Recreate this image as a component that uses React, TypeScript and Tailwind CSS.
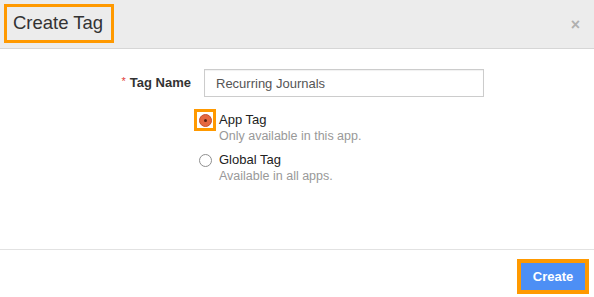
export default function App() {
  return (
    <div className="w-[594px] h-[297px] bg-white flex flex-col font-['Liberation_Sans',Arial,sans-serif] text-[#333]">
      {/* header */}
      <div className="h-[49px] bg-[#ececec] border-b border-[#d6d6d6] flex items-start justify-between shrink-0">
        <div className="ml-[4px] mt-[4px] w-[110px] h-[39px] pl-[6px] border-[3px] border-[#ff9900] flex items-center">
          <h1 className="text-[18.5px] leading-none text-[#333]">Create Tag</h1>
        </div>
        <button className="mt-[17px] mr-[14px] text-[16px] font-bold leading-none text-[#b0b0b0]">×</button>
      </div>

      {/* body */}
      <div className="flex-1 flex flex-col pt-[20px]">
        <div className="flex items-center h-[28px]">
          <div className="w-[191px] flex justify-end items-center gap-[4px]">
            <span className="text-[11px] text-[#e23b3b] -mt-[4px]">*</span>
            <span className="text-[13px] font-bold text-[#333]">Tag Name</span>
          </div>
          <input
            className="ml-[13px] w-[280px] h-[28px] border border-[#cccccc] px-[11px] text-[13px] text-[#555] outline-none shadow-[inset_0_1px_1px_rgba(0,0,0,0.06)]"
            defaultValue="Recurring Journals"
          />
        </div>

        <div className="ml-[194px] mt-[12px] flex flex-col gap-[5px]">
          <div className="flex items-start">
            <div className="w-[22px] h-[22px] border-[3px] border-[#ff9900] flex items-center justify-center shrink-0">
              <span className="w-[13px] h-[13px] rounded-full bg-[#e5673f] border border-[#c9502c] flex items-center justify-center">
                <span className="w-[3px] h-[3px] rounded-full bg-[#5a2010]" />
              </span>
            </div>
            <div className="ml-[3px] mt-[3px] flex flex-col">
              <span className="text-[13px] leading-[15px] text-[#222]">App Tag</span>
              <span className="mt-[2px] text-[12.5px] leading-[15px] text-[#999]">Only available in this app.</span>
            </div>
          </div>
          <div className="flex items-start">
            <div className="w-[22px] h-[22px] flex items-center justify-center shrink-0">
              <span className="w-[13px] h-[13px] rounded-full bg-white border border-[#8f8f8f]" />
            </div>
            <div className="ml-[3px] mt-[3px] flex flex-col">
              <span className="text-[13px] leading-[15px] text-[#222]">Global Tag</span>
              <span className="mt-[2px] text-[12.5px] leading-[15px] text-[#999]">Available in all apps.</span>
            </div>
          </div>
        </div>
      </div>

      {/* footer */}
      <div className="h-[48px] border-t border-[#e2e2e2] flex items-start justify-end shrink-0">
        <div className="mt-[9px] mr-[5px] border-[4px] border-[#ff9900]">
          <button className="w-[64px] h-[27px] bg-[#4d8ff5] text-white text-[13px] font-bold">Create</button>
        </div>
      </div>
    </div>
  );
}
